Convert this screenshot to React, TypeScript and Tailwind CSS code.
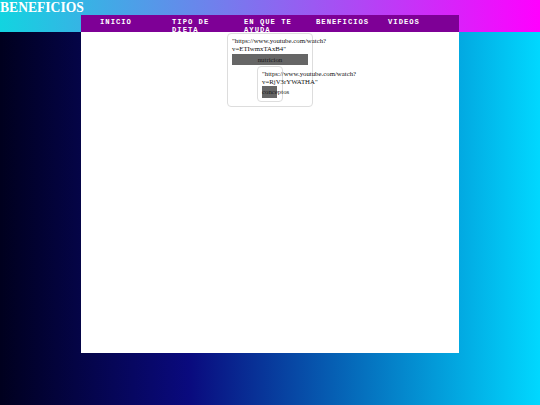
import React from "react";

const items = ["INICIO", "TIPO DE DIETA", "EN QUE TE AYUDA", "BENEFICIOS", "VIDEOS"];

export default function App() {
  return (
    <div className="w-[540px] h-[405px] overflow-hidden bg-[linear-gradient(to_right,#00001e,#0a0a7e_35%,#00d8ff)]">
      <header className="h-[32px] flex flex-col bg-[linear-gradient(to_right,#12d4e0,#ff00ff)]">
        <h1 className="h-[15px] text-white font-bold text-[13.6px] leading-[15px] font-['Liberation_Serif',serif] pl-0">
          BENEFICIOS
        </h1>
        <nav className="mx-auto w-[378px] h-[17px] bg-[#7e0096] flex overflow-hidden">
          {items.map((t) => (
            <div
              key={t}
              className="w-[72px] shrink-0 pl-[19px] pt-[3px] text-white font-bold text-[7.2px] leading-[8px] tracking-[1px] font-['Liberation_Mono',monospace]"
            >
              {t}
            </div>
          ))}
        </nav>
      </header>
      <main className="mx-auto w-[378px] h-[321px] bg-white flex flex-col items-center pt-[1px] font-['Liberation_Serif',serif]">
        <div className="w-[86px] h-[74px] border border-[#dddddd] rounded-[4px] pl-[4px] pt-[3px]">
          <p className="text-[6.8px] leading-[7.5px] text-[#111] whitespace-nowrap">
            "https://www.youtube.com/watch?
            <br />
            v=ETIwmxTAxB4"
          </p>
          <div className="mt-[1.5px] w-[76px] h-[11px] bg-[#666666] text-[#1a1a1a] text-[6.8px] leading-[11px] text-center">
            nutricion
          </div>
          <div className="ml-[25px] mt-[1px] w-[26px] h-[36px] border border-[#dddddd] rounded-[4px] pl-[4px] pt-[3px]">
            <p className="text-[6.8px] leading-[8px] text-[#111] whitespace-nowrap">
              "https://www.youtube.com/watch?
              <br />
              v=RjV3rYWATHA"
            </p>
            <div className="w-[15px] h-[12px] bg-[#666666] text-[#1a1a1a] text-[6.8px] leading-[12px] whitespace-nowrap">
              conceptos
            </div>
          </div>
        </div>
      </main>
    </div>
  );
}
